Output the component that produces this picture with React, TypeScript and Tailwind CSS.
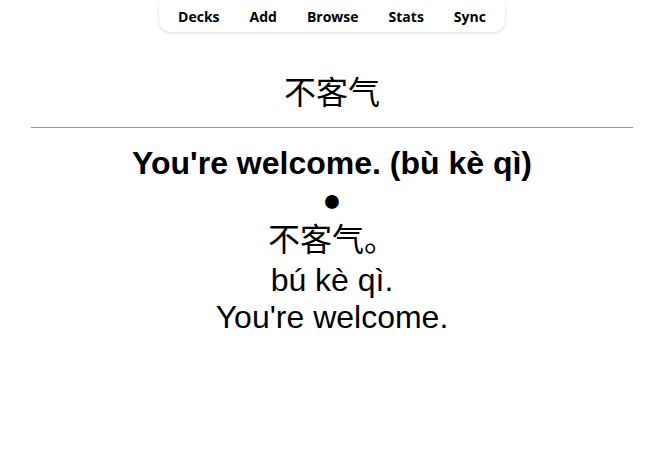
export default function App() {
  const links = ["Decks", "Add", "Browse", "Stats", "Sync"];
  return (
    <div className="min-h-screen bg-white text-black">
      <div className="flex justify-center">
        <nav className="flex h-[32px] w-[346px] items-center justify-center rounded-b-[12px] bg-white shadow-[0_1px_3px_rgba(0,0,0,0.15)] [font-family:'Open_Sans',sans-serif]">
          {links.map((l) => (
            <span key={l} className="px-[15px] text-[14px] font-bold">
              {l}
            </span>
          ))}
        </nav>
      </div>
      <div className="px-[31px] pt-[40px] text-center text-[32px] [font-family:'Liberation_Sans','Noto_Sans_CJK_SC',sans-serif]">
        <div className="leading-[42px]">不客气</div>
        <hr className="mt-[13px] border-t border-[#9a9a9a]" />
        <div className="mt-[17px] font-bold leading-[37px]">You're welcome. (bù kè qì)</div>
        <div className="leading-[37px]">●</div>
        <div className="leading-[43px]">不客气。</div>
        <div className="leading-[37px]">bú kè qì.</div>
        <div className="leading-[36px]">You're welcome.</div>
      </div>
    </div>
  );
}
